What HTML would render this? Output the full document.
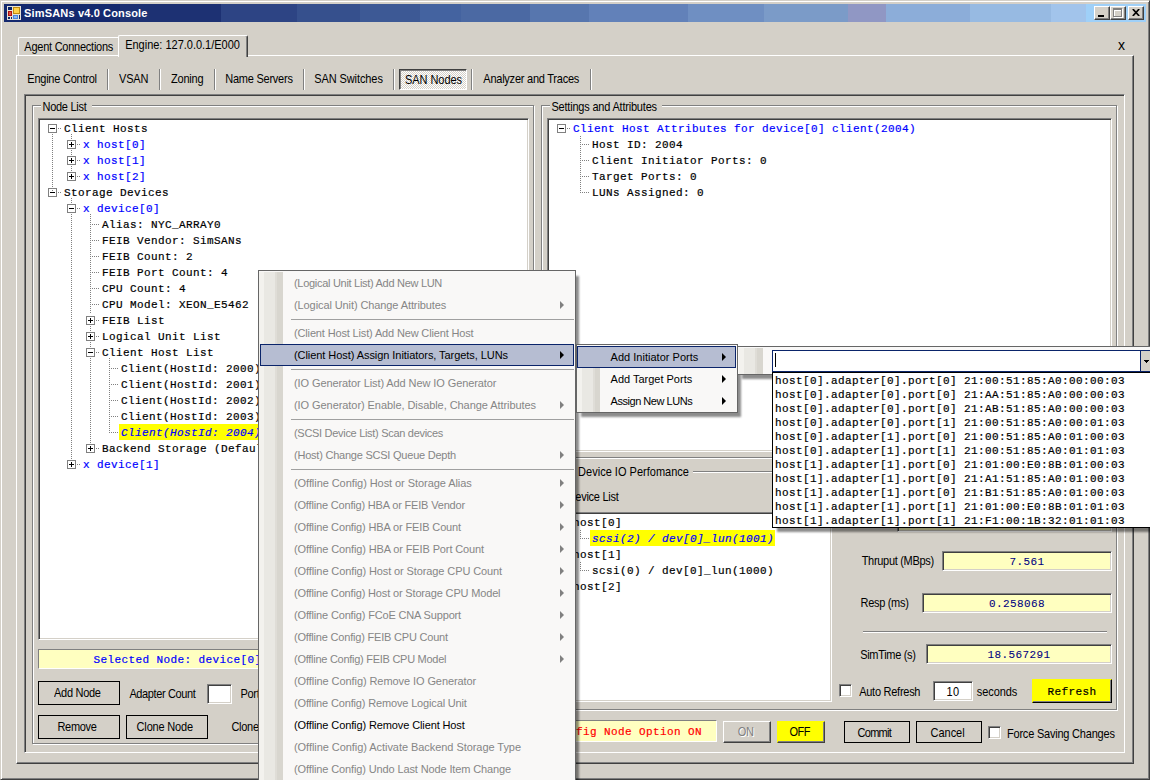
<!DOCTYPE html>
<html><head><meta charset="utf-8"><title>SimSANs v4.0 Console</title>
<style>
*{box-sizing:border-box;margin:0;padding:0}
html,body{width:1150px;height:780px;overflow:hidden;background:#D4D0C8}
body{position:relative;font:11px/13px "Liberation Sans",sans-serif;color:#000}
.a{position:absolute;white-space:pre}
.s{font:11px/13px "Liberation Sans",sans-serif}
.m{font:11px/16px "Liberation Mono",monospace;letter-spacing:0.4px;-webkit-text-stroke:0.2px currentColor}
.mr{font:11px/16px "Liberation Mono",monospace;letter-spacing:0.4px;-webkit-text-stroke:0.08px currentColor}
.blue{color:#0000FF}
.sunk{border:1px solid;border-color:#808080 #fff #fff #808080;box-shadow:inset 1px 1px 0 #404040,inset -1px -1px 0 #D4D0C8}
.gb{border:1px solid #808080;box-shadow:1px 1px 0 #fff,inset 1px 1px 0 #fff}
.gl{background:#D4D0C8}
.fbtn{border:1px solid #000;background:#D4D0C8}
.box{width:9px;height:9px;border:1px solid #808080;background:#fff}
.box i{position:absolute;left:1px;top:3px;width:5px;height:1px;background:#000}
.box b{position:absolute;left:3px;top:1px;width:1px;height:5px;background:#000}
.vd{width:1px;background:repeating-linear-gradient(to bottom,#808080 0 1px,transparent 1px 2px)}
.hd{height:1px;background:repeating-linear-gradient(to right,#808080 0 1px,transparent 1px 2px)}
.menu{background:#F9F8F7;border:1px solid #666}
.sh{box-shadow:4px 5px 2px -1px rgba(0,0,0,.45)}
.mi{font:11px/22px "Liberation Sans",sans-serif;color:#868686}
.msep{height:1px;background:#A0A0A0}
.arr{width:0;height:0;border-left:4px solid #808080;border-top:4px solid transparent;border-bottom:4px solid transparent}
.hl{background:#B6BDD2;border:1px solid #0A246A}
.img{background:linear-gradient(to right,#F3F2EE 0 5px,#E9E8E3 5px 16px,#DFDDD7 16px 18px,#D8D6CF 18px 24px)}
</style></head>
<body>
<div class="a" style="left:0px;top:0px;width:1150px;height:780px;border:1px solid;border-color:#D4D0C8 #404040 #404040 #D4D0C8;box-shadow:inset 1px 1px 0 #fff,inset -1px -1px 0 #808080"></div>
<div class="a" style="left:4px;top:4px;width:1142px;height:18px;background:linear-gradient(to right,#14296E 0px 116px,#1D3173 116px 217px,#2D4484 217px 293px,#36508D 293px 356px,#3D5995 356px 416px,#4463A0 416px 457px,#4B69A3 457px 526px,#5776AE 526px 585px,#6281B9 585px 684px,#6F8FC2 684px 760px,#7B9BC8 760px 844px,#9097C4 844px 882px,#8CADD9 882px 966px,#97BAE2 966px 1047px,#A2C4EB 1047px 1082px,#9FD0F8 1082px 1142px)"></div>
<svg class="a" style="left:7px;top:6px" width="14" height="14" viewBox="0 0 14 14"><rect width="14" height="14" fill="#E6E2D6"/><rect x="1" y="1" width="4" height="3" fill="#0A246A"/><rect x="6" y="1" width="7" height="7" fill="#C08A10"/><rect x="7" y="2" width="5" height="5" fill="#FFD24A"/><rect x="1" y="5" width="4" height="5" fill="#B01010"/><rect x="2" y="6" width="2" height="3" fill="#E05040"/><rect x="6" y="9" width="5" height="4" fill="#4A86E0"/><rect x="7" y="10" width="3" height="2" fill="#8AB8F4"/><rect x="12" y="9" width="1" height="4" fill="#0A246A"/><rect x="1" y="11" width="2" height="2" fill="#0A246A"/><rect x="4" y="11" width="1" height="2" fill="#0A246A"/></svg>
<div class="a" style="left:24.1px;top:7px;font:bold 11px/13px 'Liberation Sans',sans-serif;letter-spacing:0.153px;transform:scaleY(1);transform-origin:0 6.0px;color:#fff;">SimSANs v4.0 Console</div>
<div class="a" style="left:1094px;top:6px;width:16px;height:14px;background:#D4D0C8;border:1px solid;border-color:#fff #404040 #404040 #fff;box-shadow:inset -1px -1px 0 #808080"><div class="a" style="left:3px;top:8px;width:6px;height:2px;background:#000"></div></div>
<div class="a" style="left:1110px;top:6px;width:16px;height:14px;background:#D4D0C8;border:1px solid;border-color:#fff #404040 #404040 #fff;box-shadow:inset -1px -1px 0 #808080"><div class="a" style="left:3px;top:2px;width:9px;height:9px;border:1px solid #fff;border-top-width:2px"></div><div class="a" style="left:2px;top:1px;width:9px;height:9px;border:1px solid #808080;border-top-width:2px"></div></div>
<div class="a" style="left:1128px;top:6px;width:16px;height:14px;background:#D4D0C8;border:1px solid;border-color:#fff #404040 #404040 #fff;box-shadow:inset -1px -1px 0 #808080"><svg class="a" style="left:3px;top:2px" width="8" height="7" viewBox="0 0 8 7"><line x1="0.8" y1="0" x2="7.2" y2="7" stroke="#000" stroke-width="1.7"/><line x1="7.2" y1="0" x2="0.8" y2="7" stroke="#000" stroke-width="1.7"/></svg></div>
<div class="a" style="left:16px;top:55px;width:1118px;height:709px;border:1px solid;border-color:#fff #404040 #404040 #fff;box-shadow:inset -1px -1px 0 #808080"></div>
<div class="a" style="left:18px;top:37px;width:101px;height:19px;border:1px solid #fff;border-bottom:0;border-right:0;border-radius:2px 0 0 0"></div>
<div class="a" style="left:24.3px;top:41px;font:11px/13px 'Liberation Sans',sans-serif;letter-spacing:-0.244px;transform:scaleY(1.09);transform-origin:0 6.0px;">Agent Connections</div>
<div class="a" style="left:118px;top:35px;width:130px;height:22px;background:#D4D0C8;border:1px solid;border-color:#fff #404040 #D4D0C8 #fff;border-bottom:0;border-radius:2px 2px 0 0;box-shadow:inset -1px 0 0 #808080"></div>
<div class="a" style="left:125.2px;top:39px;font:11px/13px 'Liberation Sans',sans-serif;letter-spacing:-0.014px;transform:scaleY(1.09);transform-origin:0 6.0px;">Engine: 127.0.0.1/E000</div>
<div class="a s" style="left:1118px;top:37px;font:14px/16px 'Liberation Sans',sans-serif">x</div>
<div class="a" style="left:27.3px;top:73px;font:11px/13px 'Liberation Sans',sans-serif;letter-spacing:-0.238px;transform:scaleY(1.09);transform-origin:0 6.0px;">Engine Control</div>
<div class="a" style="left:119.0px;top:73px;font:11px/13px 'Liberation Sans',sans-serif;letter-spacing:-0.167px;transform:scaleY(1.09);transform-origin:0 6.0px;">VSAN</div>
<div class="a" style="left:171.0px;top:73px;font:11px/13px 'Liberation Sans',sans-serif;letter-spacing:-0.200px;transform:scaleY(1.09);transform-origin:0 6.0px;">Zoning</div>
<div class="a" style="left:225.2px;top:73px;font:11px/13px 'Liberation Sans',sans-serif;letter-spacing:-0.236px;transform:scaleY(1.09);transform-origin:0 6.0px;">Name Servers</div>
<div class="a" style="left:314.2px;top:73px;font:11px/13px 'Liberation Sans',sans-serif;letter-spacing:-0.091px;transform:scaleY(1.09);transform-origin:0 6.0px;">SAN Switches</div>
<div class="a" style="left:483.3px;top:73px;font:11px/13px 'Liberation Sans',sans-serif;letter-spacing:-0.239px;transform:scaleY(1.09);transform-origin:0 6.0px;">Analyzer and Traces</div>
<div class="a" style="left:107px;top:69px;width:2px;height:21px;background:linear-gradient(to right,#808080 0 1px,#fff 1px 2px)"></div>
<div class="a" style="left:159px;top:69px;width:2px;height:21px;background:linear-gradient(to right,#808080 0 1px,#fff 1px 2px)"></div>
<div class="a" style="left:214px;top:69px;width:2px;height:21px;background:linear-gradient(to right,#808080 0 1px,#fff 1px 2px)"></div>
<div class="a" style="left:303px;top:69px;width:2px;height:21px;background:linear-gradient(to right,#808080 0 1px,#fff 1px 2px)"></div>
<div class="a" style="left:393px;top:69px;width:2px;height:21px;background:linear-gradient(to right,#808080 0 1px,#fff 1px 2px)"></div>
<div class="a" style="left:471px;top:69px;width:2px;height:21px;background:linear-gradient(to right,#808080 0 1px,#fff 1px 2px)"></div>
<div class="a" style="left:590px;top:69px;width:2px;height:21px;background:linear-gradient(to right,#808080 0 1px,#fff 1px 2px)"></div>
<div class="a" style="left:399px;top:69px;width:68px;height:21px;background:repeating-conic-gradient(#fff 0 25%,#D4D0C8 0 50%) 0 0/2px 2px;border:1px solid;border-color:#404040 #fff #fff #404040;box-shadow:inset 1px 1px 0 #808080"></div>
<div class="a" style="left:405.0px;top:74px;font:11px/13px 'Liberation Sans',sans-serif;letter-spacing:-0.050px;transform:scaleY(1.09);transform-origin:0 6.0px;">SAN Nodes</div>
<div class="a" style="left:24px;top:94px;width:1101px;height:659px;border:1px solid;border-color:#808080 #fff #fff #808080;box-shadow:inset 1px 1px 0 #404040"></div>
<div class="a gb" style="left:32px;top:105px;width:502px;height:639px;"></div>
<div class="a gl" style="left:41px;top:99px;width:51px;height:13px;"></div>
<div class="a" style="left:42.5px;top:101px;font:11px/13px 'Liberation Sans',sans-serif;letter-spacing:-0.275px;transform:scaleY(1.09);transform-origin:0 6.0px;">Node List</div>
<div class="a sunk" style="left:38px;top:118px;width:491px;height:522px;background:#fff"></div>
<div class="a" style="left:38px;top:649px;width:232px;height:20px;background:#FFFFC0;border:1px solid;border-color:#808080 #fff #fff #808080"></div>
<div class="a m blue" style="left:93.5px;top:652px;">Selected Node: device[0]</div>
<div class="a fbtn" style="left:38px;top:681px;width:82px;height:24px;"></div>
<div class="a" style="left:54.0px;top:687px;font:11px/13px 'Liberation Sans',sans-serif;letter-spacing:-0.286px;transform:scaleY(1.09);transform-origin:0 6.0px;">Add Node</div>
<div class="a" style="left:129.4px;top:688px;font:11px/13px 'Liberation Sans',sans-serif;letter-spacing:-0.367px;transform:scaleY(1.09);transform-origin:0 6.0px;">Adapter Count</div>
<div class="a sunk" style="left:207px;top:684px;width:25px;height:20px;background:#fff"></div>
<div class="a" style="left:240.4px;top:688px;font:11px/13px 'Liberation Sans',sans-serif;letter-spacing:-0.270px;transform:scaleY(1.09);transform-origin:0 6.0px;">Port Count</div>
<div class="a fbtn" style="left:38px;top:715px;width:82px;height:24px;"></div>
<div class="a" style="left:57.4px;top:721px;font:11px/13px 'Liberation Sans',sans-serif;letter-spacing:-0.280px;transform:scaleY(1.09);transform-origin:0 6.0px;">Remove</div>
<div class="a fbtn" style="left:126px;top:715px;width:82px;height:24px;"></div>
<div class="a" style="left:136.6px;top:721px;font:11px/13px 'Liberation Sans',sans-serif;letter-spacing:-0.178px;transform:scaleY(1.09);transform-origin:0 6.0px;">Clone Node</div>
<div class="a" style="left:231.4px;top:721px;font:11px/13px 'Liberation Sans',sans-serif;letter-spacing:-0.270px;transform:scaleY(1.09);transform-origin:0 6.0px;">Clone Count</div>
<div class="a box" style="left:48px;top:124px;width:9px;height:9px;"><i></i></div>
<div class="a hd" style="left:58px;top:128px;width:4px;height:1px;"></div>
<div class="a m" style="left:64px;top:121px;">Client Hosts</div>
<div class="a box" style="left:67px;top:140px;width:9px;height:9px;"><i></i><b></b></div>
<div class="a hd" style="left:77px;top:144px;width:4px;height:1px;"></div>
<div class="a m blue" style="left:83px;top:137px;">x host[0]</div>
<div class="a box" style="left:67px;top:156px;width:9px;height:9px;"><i></i><b></b></div>
<div class="a hd" style="left:77px;top:160px;width:4px;height:1px;"></div>
<div class="a m blue" style="left:83px;top:153px;">x host[1]</div>
<div class="a box" style="left:67px;top:172px;width:9px;height:9px;"><i></i><b></b></div>
<div class="a hd" style="left:77px;top:176px;width:4px;height:1px;"></div>
<div class="a m blue" style="left:83px;top:169px;">x host[2]</div>
<div class="a box" style="left:48px;top:188px;width:9px;height:9px;"><i></i></div>
<div class="a hd" style="left:58px;top:192px;width:4px;height:1px;"></div>
<div class="a m" style="left:64px;top:185px;">Storage Devices</div>
<div class="a box" style="left:67px;top:204px;width:9px;height:9px;"><i></i></div>
<div class="a hd" style="left:77px;top:208px;width:4px;height:1px;"></div>
<div class="a m blue" style="left:83px;top:201px;">x device[0]</div>
<div class="a hd" style="left:90px;top:224px;width:9px;height:1px;"></div>
<div class="a m" style="left:102px;top:217px;">Alias: NYC_ARRAY0</div>
<div class="a hd" style="left:90px;top:240px;width:9px;height:1px;"></div>
<div class="a m" style="left:102px;top:233px;">FEIB Vendor: SimSANs</div>
<div class="a hd" style="left:90px;top:256px;width:9px;height:1px;"></div>
<div class="a m" style="left:102px;top:249px;">FEIB Count: 2</div>
<div class="a hd" style="left:90px;top:272px;width:9px;height:1px;"></div>
<div class="a m" style="left:102px;top:265px;">FEIB Port Count: 4</div>
<div class="a hd" style="left:90px;top:288px;width:9px;height:1px;"></div>
<div class="a m" style="left:102px;top:281px;">CPU Count: 4</div>
<div class="a hd" style="left:90px;top:304px;width:9px;height:1px;"></div>
<div class="a m" style="left:102px;top:297px;">CPU Model: XEON_E5462</div>
<div class="a box" style="left:86px;top:316px;width:9px;height:9px;"><i></i><b></b></div>
<div class="a hd" style="left:96px;top:320px;width:4px;height:1px;"></div>
<div class="a m" style="left:102px;top:313px;">FEIB List</div>
<div class="a box" style="left:86px;top:332px;width:9px;height:9px;"><i></i><b></b></div>
<div class="a hd" style="left:96px;top:336px;width:4px;height:1px;"></div>
<div class="a m" style="left:102px;top:329px;">Logical Unit List</div>
<div class="a box" style="left:86px;top:348px;width:9px;height:9px;"><i></i></div>
<div class="a hd" style="left:96px;top:352px;width:4px;height:1px;"></div>
<div class="a m" style="left:102px;top:345px;">Client Host List</div>
<div class="a hd" style="left:109px;top:368px;width:9px;height:1px;"></div>
<div class="a m" style="left:121px;top:361px;">Client(HostId: 2000)</div>
<div class="a hd" style="left:109px;top:384px;width:9px;height:1px;"></div>
<div class="a m" style="left:121px;top:377px;">Client(HostId: 2001)</div>
<div class="a hd" style="left:109px;top:400px;width:9px;height:1px;"></div>
<div class="a m" style="left:121px;top:393px;">Client(HostId: 2002)</div>
<div class="a hd" style="left:109px;top:416px;width:9px;height:1px;"></div>
<div class="a m" style="left:121px;top:409px;">Client(HostId: 2003)</div>
<div class="a hd" style="left:109px;top:432px;width:9px;height:1px;"></div>
<div class="a m" style="left:119px;top:424px;height:16px;background:#FFFF00;padding:1px 1px 0 2px;color:#0000FF;font-style:italic">Client(HostId: 2004)</div>
<div class="a box" style="left:86px;top:444px;width:9px;height:9px;"><i></i><b></b></div>
<div class="a hd" style="left:96px;top:448px;width:4px;height:1px;"></div>
<div class="a m" style="left:102px;top:441px;">Backend Storage (Default)</div>
<div class="a box" style="left:67px;top:460px;width:9px;height:9px;"><i></i><b></b></div>
<div class="a hd" style="left:77px;top:464px;width:4px;height:1px;"></div>
<div class="a m blue" style="left:83px;top:457px;">x device[1]</div>
<div class="a vd" style="left:52px;top:134px;width:1px;height:58px;"></div>
<div class="a vd" style="left:71px;top:134px;width:1px;height:6px;"></div>
<div class="a vd" style="left:71px;top:150px;width:1px;height:6px;"></div>
<div class="a vd" style="left:71px;top:166px;width:1px;height:6px;"></div>
<div class="a vd" style="left:71px;top:198px;width:1px;height:6px;"></div>
<div class="a vd" style="left:71px;top:214px;width:1px;height:246px;"></div>
<div class="a vd" style="left:90px;top:214px;width:1px;height:100px;"></div>
<div class="a vd" style="left:90px;top:326px;width:1px;height:6px;"></div>
<div class="a vd" style="left:90px;top:342px;width:1px;height:6px;"></div>
<div class="a vd" style="left:90px;top:358px;width:1px;height:86px;"></div>
<div class="a vd" style="left:109px;top:358px;width:1px;height:75px;"></div>
<div class="a gb" style="left:541px;top:105px;width:576px;height:353px;"></div>
<div class="a gl" style="left:550px;top:99px;width:112px;height:13px;"></div>
<div class="a" style="left:551.4px;top:101px;font:11px/13px 'Liberation Sans',sans-serif;letter-spacing:-0.200px;transform:scaleY(1.09);transform-origin:0 6.0px;">Settings and Attributes</div>
<div class="a sunk" style="left:547px;top:118px;width:565px;height:334px;background:#fff"></div>
<div class="a box" style="left:557px;top:124px;width:9px;height:9px;"><i></i></div>
<div class="a hd" style="left:567px;top:128px;width:4px;height:1px;"></div>
<div class="a m blue" style="left:573px;top:121px;">Client Host Attributes for device[0] client(2004)</div>
<div class="a hd" style="left:580px;top:144px;width:9px;height:1px;"></div>
<div class="a m" style="left:592px;top:137px;">Host ID: 2004</div>
<div class="a hd" style="left:580px;top:160px;width:9px;height:1px;"></div>
<div class="a m" style="left:592px;top:153px;">Client Initiator Ports: 0</div>
<div class="a hd" style="left:580px;top:176px;width:9px;height:1px;"></div>
<div class="a m" style="left:592px;top:169px;">Target Ports: 0</div>
<div class="a hd" style="left:580px;top:192px;width:9px;height:1px;"></div>
<div class="a m" style="left:592px;top:185px;">LUNs Assigned: 0</div>
<div class="a vd" style="left:580px;top:136px;width:1px;height:57px;"></div>
<div class="a gb" style="left:541px;top:471px;width:576px;height:239px;"></div>
<div class="a gl" style="left:576px;top:465px;width:117px;height:13px;"></div>
<div class="a" style="left:578.1px;top:466px;font:11px/13px 'Liberation Sans',sans-serif;letter-spacing:0.011px;transform:scaleY(1.09);transform-origin:0 6.0px;">Device IO Perfomance</div>
<div class="a" style="left:567.7px;top:491px;font:11px/13px 'Liberation Sans',sans-serif;letter-spacing:-0.270px;transform:scaleY(1.09);transform-origin:0 6.0px;">Device List</div>
<div class="a sunk" style="left:547px;top:512px;width:285px;height:190px;background:#fff"></div>
<div class="a box" style="left:557px;top:518px;width:9px;height:9px;"><i></i></div>
<div class="a hd" style="left:567px;top:522px;width:4px;height:1px;"></div>
<div class="a m" style="left:573px;top:515px;">host[0]</div>
<div class="a hd" style="left:580px;top:538px;width:9px;height:1px;"></div>
<div class="a m" style="left:590px;top:530px;height:16px;background:#FFFF00;padding:1px 1px 0 2px;color:#0000FF;font-style:italic">scsi(2) / dev[0]_lun(1001)</div>
<div class="a box" style="left:557px;top:550px;width:9px;height:9px;"><i></i></div>
<div class="a hd" style="left:567px;top:554px;width:4px;height:1px;"></div>
<div class="a m" style="left:573px;top:547px;">host[1]</div>
<div class="a hd" style="left:580px;top:570px;width:9px;height:1px;"></div>
<div class="a m" style="left:592px;top:563px;">scsi(0) / dev[0]_lun(1000)</div>
<div class="a box" style="left:557px;top:582px;width:9px;height:9px;"><i></i></div>
<div class="a hd" style="left:567px;top:586px;width:4px;height:1px;"></div>
<div class="a m" style="left:573px;top:579px;">host[2]</div>
<div class="a vd" style="left:580px;top:530px;width:1px;height:9px;"></div>
<div class="a vd" style="left:580px;top:562px;width:1px;height:9px;"></div>
<div class="a sunk mr" style="left:897px;top:512px;width:215px;height:20px;background:#FFFFC0;text-align:center;color:#000080;line-height:21px"></div>
<div class="a" style="left:861.7px;top:555px;font:11px/13px 'Liberation Sans',sans-serif;letter-spacing:-0.300px;transform:scaleY(1.09);transform-origin:0 6.0px;">Thruput (MBps)</div>
<div class="a sunk mr" style="left:942px;top:551px;width:170px;height:20px;background:#FFFFC0;text-align:center;color:#000080;line-height:21px">7.561</div>
<div class="a" style="left:860.6px;top:597px;font:11px/13px 'Liberation Sans',sans-serif;letter-spacing:-0.312px;transform:scaleY(1.09);transform-origin:0 6.0px;">Resp (ms)</div>
<div class="a sunk mr" style="left:922px;top:593px;width:190px;height:20px;background:#FFFFC0;text-align:center;color:#000080;line-height:21px">0.258068</div>
<div class="a" style="left:863px;top:631px;width:244px;height:2px;background:linear-gradient(to bottom,#808080 0 1px,#fff 1px 2px)"></div>
<div class="a" style="left:860.2px;top:649px;font:11px/13px 'Liberation Sans',sans-serif;letter-spacing:-0.320px;transform:scaleY(1.09);transform-origin:0 6.0px;">SimTime (s)</div>
<div class="a sunk mr" style="left:926px;top:644px;width:186px;height:20px;background:#FFFFC0;text-align:center;color:#000080;line-height:21px">18.567291</div>
<div class="a sunk" style="left:839px;top:684px;width:13px;height:13px;background:#fff"></div>
<div class="a" style="left:859.2px;top:686px;font:11px/13px 'Liberation Sans',sans-serif;letter-spacing:-0.264px;transform:scaleY(1.09);transform-origin:0 6.0px;">Auto Refresh</div>
<div class="a sunk" style="left:933px;top:681px;width:40px;height:20px;background:#fff"></div>
<div class="a" style="left:946.5px;top:686px;font:11px/13px 'Liberation Sans',sans-serif;letter-spacing:0.300px;transform:scaleY(1.09);transform-origin:0 6.0px;">10</div>
<div class="a" style="left:976.8px;top:686px;font:11px/13px 'Liberation Sans',sans-serif;letter-spacing:-0.083px;transform:scaleY(1.09);transform-origin:0 6.0px;">seconds</div>
<div class="a m" style="left:1032px;top:679px;width:80px;height:24px;background:#FFFF00;border:1px solid;border-color:#FFFF00 #000 #000 #FFFF00;box-shadow:inset -1px -1px 0 #808080;text-align:center;line-height:25px">Refresh</div>
<div class="a m" style="left:490px;top:720px;width:227px;height:22px;background:#FFFFC0;color:#FF0000;line-height:23px;padding-left:8px;border:1px solid;border-color:#808080 #fff #fff #808080">Offline Config Node Option ON</div>
<div class="a" style="left:723px;top:721px;width:48px;height:22px;border:1px solid;border-color:#fff #404040 #404040 #fff;box-shadow:inset -1px -1px 0 #808080"></div>
<div class="a" style="left:738.7px;top:726px;font:11px/13px 'Liberation Sans',sans-serif;letter-spacing:-0.200px;transform:scaleY(1.2);transform-origin:0 6.0px;color:#fff;">ON</div>
<div class="a" style="left:737.7px;top:725px;font:11px/13px 'Liberation Sans',sans-serif;letter-spacing:-0.200px;transform:scaleY(1.2);transform-origin:0 6.0px;color:#808080;">ON</div>
<div class="a" style="left:777px;top:721px;width:48px;height:22px;background:#FFFF00;border:1px solid;border-color:#FFFF00 #404040 #404040 #FFFF00;box-shadow:inset -1px -1px 0 #808080"></div>
<div class="a" style="left:789.4px;top:725px;font:11px/13px 'Liberation Sans',sans-serif;letter-spacing:-0.400px;transform:scaleY(1.2);transform-origin:0 6.0px;">OFF</div>
<div class="a fbtn" style="left:844px;top:721px;width:66px;height:22px;"></div>
<div class="a" style="left:857.5px;top:727px;font:11px/13px 'Liberation Sans',sans-serif;letter-spacing:-0.700px;transform:scaleY(1.09);transform-origin:0 6.0px;">Commit</div>
<div class="a fbtn" style="left:916px;top:721px;width:66px;height:22px;"></div>
<div class="a" style="left:930.6px;top:727px;font:11px/13px 'Liberation Sans',sans-serif;letter-spacing:-0.040px;transform:scaleY(1.09);transform-origin:0 6.0px;">Cancel</div>
<div class="a sunk" style="left:988px;top:726px;width:13px;height:13px;background:#fff"></div>
<div class="a" style="left:1007.0px;top:728px;font:11px/13px 'Liberation Sans',sans-serif;letter-spacing:-0.211px;transform:scaleY(1.09);transform-origin:0 6.0px;">Force Saving Changes</div>
<div class="a menu sh" style="left:258px;top:270px;width:318px;height:520px;"></div>
<div class="a img" style="left:259px;top:272px;width:24px;height:510px;"></div>
<div class="a mi" style="left:294px;top:272px;letter-spacing:-0.294px;">(Logical Unit List) Add New LUN</div>
<div class="a mi" style="left:294px;top:294px;letter-spacing:-0.097px;">(Logical Unit) Change Attributes</div>
<div class="a arr" style="left:560px;top:301px;"></div>
<div class="a msep" style="left:291px;top:319px;width:283px;height:1px;"></div>
<div class="a mi" style="left:294px;top:322px;letter-spacing:-0.151px;">(Client Host List) Add New Client Host</div>
<div class="a hl" style="left:260px;top:344px;width:314px;height:22px;"></div>
<div class="a mi" style="left:294px;top:344px;letter-spacing:-0.061px;color:#000;">(Client Host) Assign Initiators, Targets, LUNs</div>
<div class="a arr" style="left:560px;top:351px;border-left-color:#000"></div>
<div class="a msep" style="left:291px;top:369px;width:283px;height:1px;"></div>
<div class="a mi" style="left:294px;top:372px;letter-spacing:-0.091px;">(IO Generator List) Add New IO Generator</div>
<div class="a mi" style="left:294px;top:394px;letter-spacing:-0.065px;">(IO Generator) Enable, Disable, Change Attributes</div>
<div class="a arr" style="left:560px;top:401px;"></div>
<div class="a msep" style="left:291px;top:419px;width:283px;height:1px;"></div>
<div class="a mi" style="left:294px;top:422px;letter-spacing:-0.301px;">(SCSI Device List) Scan devices</div>
<div class="a mi" style="left:294px;top:444px;letter-spacing:-0.226px;">(Host) Change SCSI Queue Depth</div>
<div class="a arr" style="left:560px;top:451px;"></div>
<div class="a msep" style="left:291px;top:469px;width:283px;height:1px;"></div>
<div class="a mi" style="left:294px;top:472px;letter-spacing:-0.065px;">(Offline Config) Host or Storage Alias</div>
<div class="a arr" style="left:560px;top:479px;"></div>
<div class="a mi" style="left:294px;top:494px;letter-spacing:-0.175px;">(Offline Config) HBA or FEIB Vendor</div>
<div class="a arr" style="left:560px;top:501px;"></div>
<div class="a mi" style="left:294px;top:516px;letter-spacing:-0.135px;">(Offline Config) HBA or FEIB Count</div>
<div class="a arr" style="left:560px;top:523px;"></div>
<div class="a mi" style="left:294px;top:538px;letter-spacing:-0.124px;">(Offline Config) HBA or FEIB Port Count</div>
<div class="a arr" style="left:560px;top:545px;"></div>
<div class="a mi" style="left:294px;top:560px;letter-spacing:-0.109px;">(Offline Config) Host or Storage CPU Count</div>
<div class="a arr" style="left:560px;top:567px;"></div>
<div class="a mi" style="left:294px;top:582px;letter-spacing:-0.161px;">(Offline Config) Host or Storage CPU Model</div>
<div class="a arr" style="left:560px;top:589px;"></div>
<div class="a mi" style="left:294px;top:604px;letter-spacing:-0.158px;">(Offline Config) FCoE CNA Support</div>
<div class="a arr" style="left:560px;top:611px;"></div>
<div class="a mi" style="left:294px;top:626px;letter-spacing:-0.196px;">(Offline Config) FEIB CPU Count</div>
<div class="a arr" style="left:560px;top:633px;"></div>
<div class="a mi" style="left:294px;top:648px;letter-spacing:-0.27px;">(Offline Config) FEIB CPU Model</div>
<div class="a arr" style="left:560px;top:655px;"></div>
<div class="a mi" style="left:294px;top:670px;letter-spacing:-0.079px;">(Offline Config) Remove IO Generator</div>
<div class="a mi" style="left:294px;top:692px;letter-spacing:-0.154px;">(Offline Config) Remove Logical Unit</div>
<div class="a mi" style="left:294px;top:714px;letter-spacing:-0.113px;color:#000;">(Offline Config) Remove Client Host</div>
<div class="a mi" style="left:294px;top:736px;letter-spacing:-0.055px;">(Offline Config) Activate Backend Storage Type</div>
<div class="a mi" style="left:294px;top:758px;letter-spacing:-0.125px;">(Offline Config) Undo Last Node Item Change</div>
<div class="a menu sh" style="left:576px;top:344px;width:162px;height:69px;"></div>
<div class="a img" style="left:577px;top:346px;width:23px;height:66px;"></div>
<div class="a hl" style="left:577px;top:346px;width:159px;height:22px;"></div>
<div class="a mi" style="left:610.6px;top:346px;letter-spacing:0.014px;color:#000;">Add Initiator Ports</div>
<div class="a arr" style="left:722px;top:353px;border-left-color:#000"></div>
<div class="a mi" style="left:610.6px;top:368px;letter-spacing:-0.01px;color:#000;">Add Target Ports</div>
<div class="a arr" style="left:722px;top:375px;border-left-color:#000"></div>
<div class="a mi" style="left:610.6px;top:390px;letter-spacing:-0.471px;color:#000;">Assign New LUNs</div>
<div class="a arr" style="left:722px;top:397px;border-left-color:#000"></div>
<div class="a menu sh" style="left:737px;top:346px;width:420px;height:29px;"></div>
<div class="a img" style="left:739px;top:348px;width:24px;height:26px;"></div>
<div class="a" style="left:772px;top:350px;width:380px;height:22px;background:#fff;border:1px solid #0A246A"></div>
<div class="a" style="left:775px;top:353px;width:1px;height:14px;background:#000"></div>
<div class="a" style="left:1140px;top:351px;width:12px;height:20px;background:#D4D0C8;border-left:1px solid #0A246A"></div>
<svg class="a" style="left:1144px;top:360px" width="5" height="3" viewBox="0 0 5 3"><path d="M0 0h5v1H4v1H3v1H2V2H1V1H0z" fill="#000"/></svg>
<div class="a sh" style="left:772px;top:372px;width:385px;height:156px;background:#fff;border:1px solid #000"></div>
<div class="a m" style="left:775px;top:374px;line-height:14px">host[0].adapter[0].port[0] 21:00:51:85:A0:00:00:03</div>
<div class="a m" style="left:775px;top:388px;line-height:14px">host[0].adapter[0].port[0] 21:AA:51:85:A0:00:00:03</div>
<div class="a m" style="left:775px;top:402px;line-height:14px">host[0].adapter[0].port[0] 21:AB:51:85:A0:00:00:03</div>
<div class="a m" style="left:775px;top:416px;line-height:14px">host[0].adapter[0].port[1] 21:00:51:85:A0:00:01:03</div>
<div class="a m" style="left:775px;top:430px;line-height:14px">host[0].adapter[1].port[0] 21:00:51:85:A0:01:00:03</div>
<div class="a m" style="left:775px;top:444px;line-height:14px">host[0].adapter[1].port[1] 21:00:51:85:A0:01:01:03</div>
<div class="a m" style="left:775px;top:458px;line-height:14px">host[1].adapter[1].port[0] 21:01:00:E0:8B:01:00:03</div>
<div class="a m" style="left:775px;top:472px;line-height:14px">host[1].adapter[1].port[0] 21:A1:51:85:A0:01:00:03</div>
<div class="a m" style="left:775px;top:486px;line-height:14px">host[1].adapter[1].port[0] 21:B1:51:85:A0:01:00:03</div>
<div class="a m" style="left:775px;top:500px;line-height:14px">host[1].adapter[1].port[1] 21:01:00:E0:8B:01:01:03</div>
<div class="a m" style="left:775px;top:514px;line-height:14px">host[1].adapter[1].port[1] 21:F1:00:1B:32:01:01:03</div>
</body></html>
